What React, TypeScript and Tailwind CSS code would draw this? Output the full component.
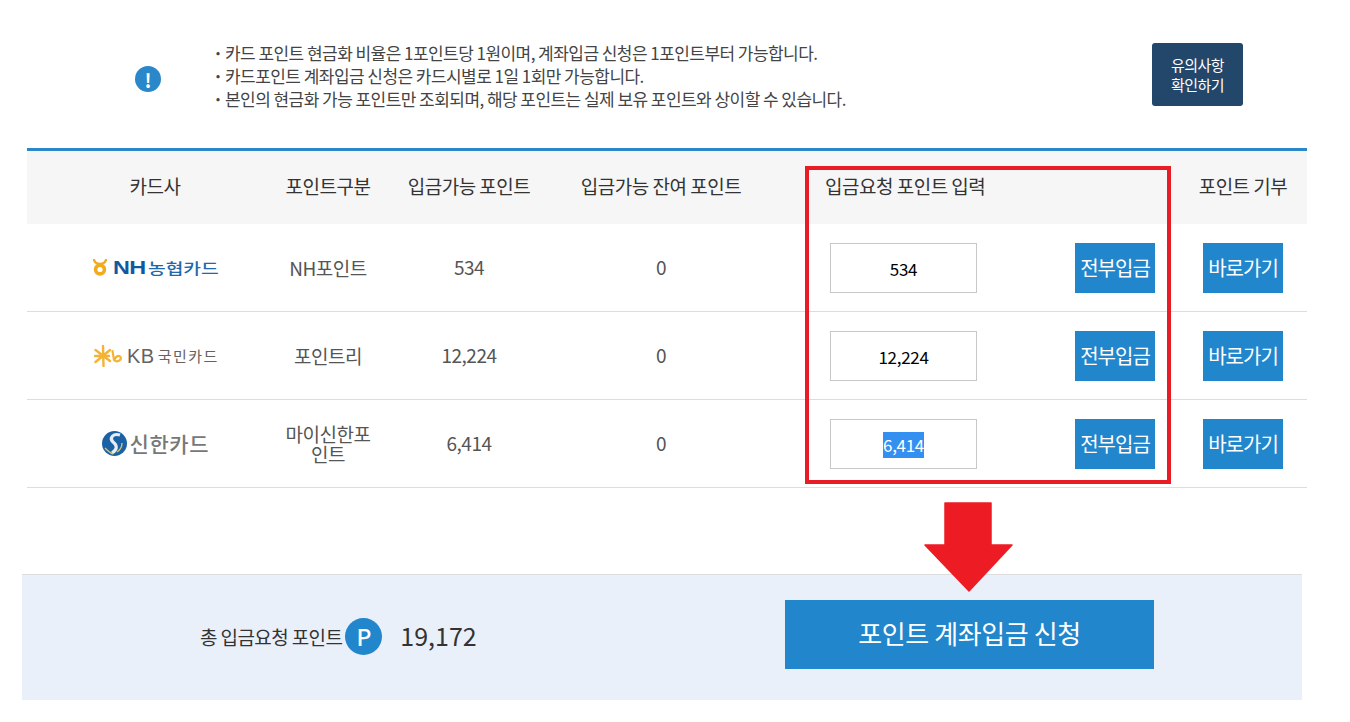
const FONT = "font-['Noto_Sans_CJK_KR','Noto_Sans',sans-serif]"

const NOTES = [
  '카드 포인트 현금화 비율은 1포인트당 1원이며, 계좌입금 신청은 1포인트부터 가능합니다.',
  '카드포인트 계좌입금 신청은 카드시별로 1일 1회만 가능합니다.',
  '본인의 현금화 가능 포인트만 조회되며, 해당 포인트는 실제 보유 포인트와 상이할 수 있습니다.',
]

const ROWS = [
  { logo: <NhLogo />, type: 'NH포인트', avail: '534', input: '534' },
  { logo: <KbLogo />, type: '포인트리', avail: '12,224', input: '12,224' },
  { logo: <ShinhanLogo />, type: '마이신한포인트', avail: '6,414', input: '6,414', selected: true },
]

const GRID = 'grid grid-cols-[256px_90px_192px_192px_422px_128px]'

function NhLogo() {
  return (
    <div className="flex items-center w-[125px] text-left">
      <svg width="14" height="17" viewBox="0 0 14 17" className="mr-[6px] shrink-0">
        <path d="M1 1 Q2.5 5 7 5 Q11.5 5 13 1" fill="none" stroke="#f2ab1c" strokeWidth="2.4" strokeLinecap="round" />
        <circle cx="7" cy="10.5" r="4.4" fill="none" stroke="#f2ab1c" strokeWidth="3.6" />
      </svg>
      <span className="inline-block w-[35px] origin-left scale-x-[1.3] font-['Liberation_Sans'] text-[18px] font-bold leading-none text-[#12589f]">NH</span>
      <span className="inline-block w-[70px] origin-left scale-x-[1.28] text-[15px] font-medium leading-none text-[#1f68ad] tracking-[0px] whitespace-nowrap">농협카드</span>
    </div>
  )
}

function KbLogo() {
  return (
    <div className="flex items-center w-[122px] text-left">
      <svg width="29" height="22" viewBox="0 0 29 22" className="mr-[4px] shrink-0">
        <path d="M9 1 L9.5 21 M1.5 5 L16 16 M1.5 17 L16 5 M1 11 L15 11" stroke="#f5b335" strokeWidth="2.4" strokeLinecap="round" />
        <path d="M18.5 6 L20 15 C23 18 28 15 26.5 12 C25 10 22 11 21 14" fill="none" stroke="#f5b335" strokeWidth="2.2" strokeLinecap="round" />
      </svg>
      <span className="font-['Liberation_Sans'] text-[20px] leading-none text-[#66625e] mr-[3px] tracking-[0.5px]">KB</span>
      <span className="text-[15px] leading-none text-[#66625e] whitespace-nowrap tracking-[1.5px]">국민카드</span>
    </div>
  )
}

function ShinhanLogo() {
  return (
    <div className="flex items-center w-[107px] text-left">
      <svg width="25" height="25" viewBox="0 0 25 25" className="mr-[3px] shrink-0">
        <circle cx="12.5" cy="12.5" r="12.5" fill="#1b62a5" />
        <path d="M18 4 C11 2 7 7 11 11 C15 14 16 18 10 22" fill="none" stroke="#e6eef3" strokeWidth="3.2" />
        <path d="M3 17 C6 20 8 22 11 23 M20 12 C20 16 18 19 15 21" fill="none" stroke="#dcc06c" strokeWidth="1.4" />
      </svg>
      <span className="text-[21px] font-medium leading-none text-[#777] whitespace-nowrap tracking-[0.6px]">신한카드</span>
    </div>
  )
}

export default function App() {
  return (
    <div className={`w-[1350px] h-[722px] bg-white overflow-hidden relative text-[#333] ${FONT}`}>
      {/* notice */}
      <div className="flex h-[148px] pt-[42px]">
        <div className="w-[213px] pl-[135px] pt-[24px] shrink-0">
          <div className="w-[26px] h-[26px] rounded-full bg-[#2a87c9] flex items-center justify-center text-white text-[19px] font-bold leading-none">!</div>
        </div>
        <ul className="w-[939px] text-[17px] leading-[23px] tracking-[-0.55px] text-[#444]">
          {NOTES.map(n => (
            <li key={n} className="flex -translate-y-[1px]">
              <span className="w-[12px] shrink-0 font-bold">·</span>
              <span>{n}</span>
            </li>
          ))}
        </ul>
        <button className="w-[91px] h-[63px] mt-[1px] rounded-[3px] bg-[#23466b] text-white text-[15px] leading-[20px] tracking-[-0.5px]">
          유의사항<br />확인하기
        </button>
      </div>

      {/* table */}
      <div className="mx-[27px] w-[1280px] border-t-[3px] border-[#2a87c9]">
        <div className={`${GRID} h-[73px] pb-[2px] items-center text-center bg-[#f6f6f6] text-[19px] tracking-[-0.5px] text-[#333]`}>
          <div>카드사</div>
          <div className="whitespace-nowrap">포인트구분</div>
          <div>입금가능 포인트</div>
          <div>입금가능 잔여 포인트</div>
          <div className="text-left pl-[68px]">입금요청 포인트 입력</div>
          <div>포인트 기부</div>
        </div>
        {ROWS.map(r => (
          <div key={r.type} className={`${GRID} h-[88px] items-center text-center border-b border-[#ddd] text-[19px] tracking-[-0.5px] text-[#555]`}>
            <div className="flex justify-center">{r.logo}</div>
            <div className="leading-[20px] px-[1px]">{r.type}</div>
            <div>{r.avail}</div>
            <div>0</div>
            <div className="flex items-center pl-[73px]">
              <div className="w-[147px] h-[50px] border border-[#c8c8c8] flex items-center justify-center text-[17px] tracking-[-0.3px] pt-[2px] text-black">
                {r.selected ? <span className="bg-[#3390f0] text-white leading-[26px]">{r.input}</span> : r.input}
              </div>
              <button className="ml-[98px] w-[80px] h-[50px] bg-[#2286cc] text-white text-[20px] tracking-[-1px]">전부입금</button>
            </div>
            <div className="flex justify-center">
              <button className="w-[80px] h-[50px] bg-[#2286cc] text-white text-[20px] tracking-[-1px]">바로가기</button>
            </div>
          </div>
        ))}
      </div>

      {/* total */}
      <div className="mt-[86px] ml-[22px] w-[1280px] h-[126px] bg-[#eaf0f9] border-t border-[#ddd] flex items-center">
        <div className="w-[763px] flex items-center pl-[178px]">
          <span className="text-[19px] tracking-[-0.6px] text-[#333]">총 입금요청 포인트</span>
          <span className="ml-[3px] mb-[2px] w-[37px] h-[37px] rounded-full bg-[#2286cc] text-white text-[23px] font-medium flex items-center justify-center">P</span>
          <span className="ml-[18px] mb-[3px] text-[25px] text-[#333]">19,172</span>
        </div>
        <button className="w-[369px] h-[69px] mb-[7px] pb-[3px] bg-[#2286cc] text-white text-[26px] tracking-[-0.4px]">포인트 계좌입금 신청</button>
      </div>

      {/* annotations */}
      <div className="absolute left-[805px] top-[166px] w-[366px] h-[318px] border-[4px] border-[#e81c25] pointer-events-none" />
      <svg className="absolute left-[924px] top-[502px]" width="90" height="90" viewBox="0 0 90 90">
        <path d="M21 1 H67 V43 H88 L45 89 L1 43 H21 Z" fill="#ed1c24" stroke="#ed1c24" strokeWidth="1.5" strokeLinejoin="round" />
      </svg>
    </div>
  )
}
